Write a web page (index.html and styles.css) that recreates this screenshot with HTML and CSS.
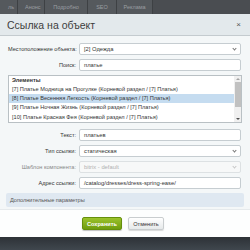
FILE: index.html
```html
<!DOCTYPE html>
<html lang="ru">
<head>
<meta charset="utf-8">
<title>Ссылка на объект</title>
<link rel="stylesheet" href="styles.css">
</head>
<body>
<div class="topbar">
  <div class="tab tab-first">ль</div>
  <div class="tab">Анонс</div>
  <div class="tab">Подробно</div>
  <div class="tab">SEO</div>
  <div class="tab">Реклама</div>
</div>
<div class="dialog">
  <div class="dialog-head">
    <span class="dialog-title">Ссылка на объект</span>
    <span class="dialog-close">×</span>
  </div>
  <div class="dialog-body">
    <div class="row">
      <label class="lbl">Местоположение объекта:</label>
      <div class="ctl select">[2] Одежда<span class="chev"></span></div>
    </div>
    <div class="row">
      <label class="lbl">Поиск:</label>
      <div class="ctl input">платье</div>
    </div>
    <div class="listbox">
      <div class="list-items">
        <div class="li li-head">Элементы</div>
        <div class="li">[7] Платье Модница на Прогулке (Корневой раздел / [7] Платья)</div>
        <div class="li li-sel">[8] Платье Весенняя Легкость (Корневой раздел / [7] Платья)</div>
        <div class="li">[9] Платье Ночная Жизнь (Корневой раздел / [7] Платья)</div>
        <div class="li">[10] Платье Красная Фея (Корневой раздел / [7] Платья)</div>
      </div>
      <div class="scrollbar">
        <span class="sb-arrow sb-up"></span>
        <span class="sb-thumb"></span>
        <span class="sb-arrow sb-down"></span>
      </div>
    </div>
    <div class="row row-gap">
      <label class="lbl">Текст:</label>
      <div class="ctl input">платьев</div>
    </div>
    <div class="row">
      <label class="lbl">Тип ссылки:</label>
      <div class="ctl select">статическая<span class="chev"></span></div>
    </div>
    <div class="row">
      <label class="lbl lbl-dis">Шаблон компонента:</label>
      <div class="ctl select disabled">bitrix - default<span class="chev"></span></div>
    </div>
    <div class="row">
      <label class="lbl">Адрес ссылки:</label>
      <div class="ctl input">/catalog/dresses/dress-spring-ease/</div>
    </div>
    <div class="extra">Дополнительные параметры</div>
  </div>
  <div class="dialog-foot">
    <button class="btn btn-save">Сохранить</button>
    <button class="btn btn-cancel">Отменить</button>
  </div>
</div>
<div class="backdrop"></div>
</body>
</html>
```
FILE: styles.css
```css
* { box-sizing: border-box; }
html, body { margin: 0; padding: 0; }
body {
  width: 250px;
  height: 250px;
  overflow: hidden;
  background: #3a4046;
  font-family: "Liberation Sans", Arial, sans-serif;
  color: #333;
}
.topbar {
  height: 14px;
  display: flex;
  background: #4a4d51;
}
.tab {
  height: 14px;
  padding: 0 7px;
  display: flex;
  align-items: center;
  font-size: 5.5px;
  color: #9a9ea2;
  background: #55595d;
  border-right: 1px solid #3e4144;
}
.tab-first { padding: 0 3px 0 0; width: 18px; justify-content: flex-end; }
.tab:nth-child(2) { width: 27px; }
.tab:nth-child(3) { width: 43px; justify-content: center; }
.tab:nth-child(4) { width: 29px; justify-content: center; }
.tab:nth-child(5) { width: 36px; justify-content: center; }

.dialog { background: #f4f7f8; }
.dialog-head {
  height: 22px;
  background: #e3e9ec;
  border-bottom: 1px solid #c4cbcf;
  display: flex;
  align-items: center;
  justify-content: space-between;
  padding: 0 9px 0 7px;
}
.dialog-title { font-size: 10.5px; color: #3d3d3d; }
.dialog-close { font-size: 8px; color: #555; }

.dialog-body {
  padding: 7px 8px 2px 8px;
  display: flex;
  flex-direction: column;
  gap: 4px;
}
.row {
  display: grid;
  grid-template-columns: 68px 1fr;
  column-gap: 3px;
  align-items: center;
  margin-right: 1px;
}
.row-gap { margin-top: 2px; }
.lbl {
  text-align: right;
  font-size: 5.6px;
  color: #333;
  white-space: nowrap;
}
.lbl-dis { color: #888; }
.ctl {
  height: 12px;
  background: #fff;
  border: 1px solid #c6cdd1;
  border-radius: 2px;
  font-size: 5.8px;
  padding: 0 4px;
  display: flex;
  align-items: center;
  position: relative;
  color: #333;
  white-space: nowrap;
}
.select { background: #fff; }
.chev {
  position: absolute;
  right: 4px;
  top: 3px;
  width: 3px;
  height: 3px;
  border-right: 1px solid #777;
  border-bottom: 1px solid #777;
  transform: rotate(45deg);
}
.disabled { color: #b0b0b0; background: #f7f8f8; border-color: #dde1e3; }
.disabled .chev { border-color: #c8c8c8; }

.listbox {
  height: 48px;
  border: 1px solid #b9c0c4;
  background: #fff;
  display: flex;
  overflow: hidden;
}
.list-items { flex: 1; min-width: 0; }
.li {
  height: 9.2px;
  font-size: 5.6px;
  padding-left: 3px;
  display: flex;
  align-items: center;
  white-space: nowrap;
  overflow: hidden;
  color: #333;
}
.li-head { font-weight: bold; height: 8.5px; }
.li-sel { background: #c5dcf0; }
.scrollbar {
  width: 7px;
  background: #f0f0f0;
  position: relative;
  display: flex;
  flex-direction: column;
  align-items: center;
}
.sb-arrow {
  width: 0; height: 0;
  border-left: 2px solid transparent;
  border-right: 2px solid transparent;
}
.sb-up { border-bottom: 2px solid #a3a3a3; margin-top: 2px; }
.sb-down { border-top: 2px solid #505050; margin-top: auto; margin-bottom: 2px; }
.sb-thumb {
  width: 6px;
  height: 25px;
  background: #c1c1c1;
  margin-top: 2px;
}

.extra {
  margin: 0 -2px;
  height: 14px;
  background: #dfe8f1;
  border-radius: 2px;
  font-size: 5.6px;
  color: #555;
  padding-left: 4px;
  display: flex;
  align-items: center;
}

.dialog-foot {
  height: 28px;
  background: #fdfefe;
  border-top: 1px solid #e6eaec;
  display: flex;
  justify-content: center;
  align-items: center;
  gap: 6px;
  padding-right: 4px;
}
.btn {
  height: 13px;
  font-family: "Liberation Sans", Arial, sans-serif;
  font-size: 5.6px;
  border-radius: 2px;
  padding: 0;
  display: flex;
  align-items: center;
  justify-content: center;
}
.btn-save {
  width: 40px;
  color: #fff;
  font-weight: bold;
  background: linear-gradient(#9bc22c, #6f9d0f);
  border: 1px solid #658f0c;
  box-shadow: 0 1px 1px rgba(0,0,0,0.25);
}
.btn-cancel {
  width: 36px;
  color: #333;
  background: linear-gradient(#ffffff, #e6e9ea);
  border: 1px solid #c9cdcf;
  box-shadow: 0 1px 1px rgba(0,0,0,0.15);
}
.backdrop {
  height: 20px;
  background: linear-gradient(#2d3237, #4a525a);
}
```
